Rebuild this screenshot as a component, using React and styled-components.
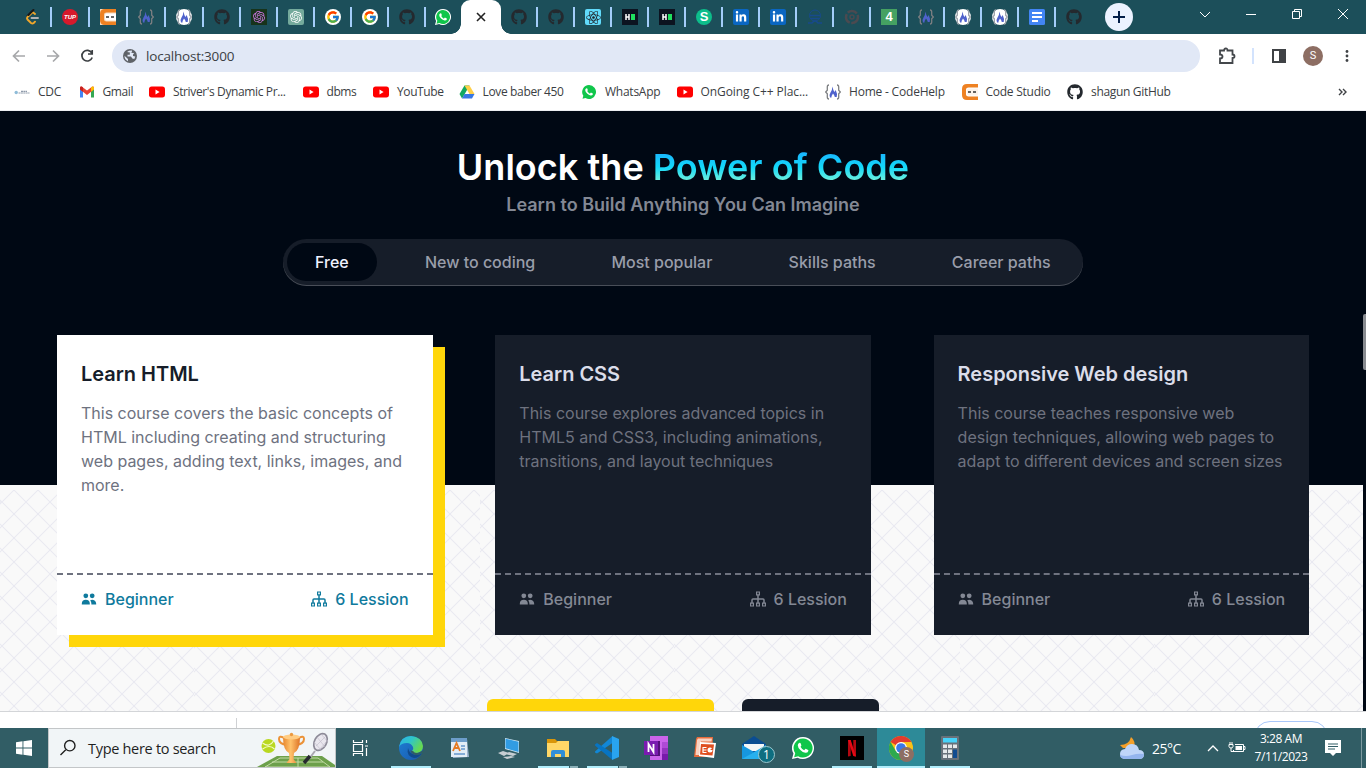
import React from "react";
import styled, { createGlobalStyle, css } from "styled-components";
import { FaGithub, FaReact, FaLinkedinIn } from "react-icons/fa";
import { SiOpenai } from "react-icons/si";
import { FcGoogle } from "react-icons/fc";
import { HiUsers } from "react-icons/hi";

const Global = createGlobalStyle`
  * { box-sizing: border-box; }
  body { margin: 0; overflow: hidden; background: #fff; }
  svg { display: block; flex: none; }
`;

const ui = `"Open Sans", "Noto Sans", sans-serif`;

const Screen = styled.div`
  width: 1366px;
  height: 768px;
  display: flex;
  flex-direction: column;
  overflow: hidden;
  font-family: ${ui};
`;

/* ---------- browser chrome ---------- */
const TabStrip = styled.div`
  height: 34px;
  flex: none;
  display: flex;
  background: #1c4f5a;
  padding-left: 14px;
`;
const Tab = styled.div`
  width: ${(p) => p.$w}px;
  height: 34px;
  display: flex;
  align-items: center;
  justify-content: flex-end;
  padding-right: ${(p) => (p.$w === 38 ? 10 : 9)}px;
  border-right: 2px solid transparent;
  &::after {
    content: "";
    width: 2px;
    height: 20px;
    margin-right: ${(p) => (p.$w === 38 ? -12 : -11)}px;
    margin-left: ${(p) => (p.$w === 38 ? 10 : 9)}px;
    background: ${(p) => (p.$last ? "transparent" : "#a3cdfa")};
  }
`;
const ActiveTab = styled.div`
  width: 40px;
  height: 34px;
  margin-left: -1px;
  background: #fff;
  border-radius: 9px 9px 0 0;
  display: flex;
  align-items: center;
  justify-content: center;
  position: relative;
  &::before,
  &::after {
    content: "";
    position: absolute;
    bottom: 0;
    width: 10px;
    height: 10px;
  }
  &::before {
    right: 100%;
    background: radial-gradient(circle at 0 0, transparent 9.5px, #fff 10px);
  }
  &::after {
    left: 100%;
    background: radial-gradient(circle at 100% 0, transparent 9.5px, #fff 10px);
  }
`;
const NewTab = styled.div`
  width: 28px;
  height: 28px;
  border-radius: 50%;
  background: #ecf2ff;
  margin: 3px 0 0 12px;
  display: flex;
  align-items: center;
  justify-content: center;
`;
const WindowControls = styled.div`
  margin-left: auto;
  width: 184px;
  height: 28px;
  display: flex;
  align-items: center;
  > * {
    width: 46px;
  }
`;
const Favicon = styled.div`
  width: 16px;
  height: 16px;
  flex: none;
  display: flex;
  align-items: center;
  justify-content: center;
  overflow: hidden;
  border-radius: ${(p) => p.$r || "0"};
  background: ${(p) => p.$bg || "none"};
  color: ${(p) => p.$c || "#fff"};
  font: 700 ${(p) => p.$fs || 13}px/16px "Liberation Sans", sans-serif;
`;
const Toolbar = styled.div`
  height: 44px;
  flex: none;
  display: flex;
  align-items: center;
  padding-left: 11px;
`;
const NavButtons = styled.div`
  width: 101px;
  display: flex;
  gap: 18px;
`;
const UrlBar = styled.div`
  width: 1088px;
  height: 32px;
  border-radius: 16px;
  background: #e1e8f6;
  display: flex;
  align-items: center;
  gap: 9px;
  padding-left: 11px;
  font-size: 13.5px;
  letter-spacing: -0.2px;
  color: #3c3f44;
`;
const Actions = styled.div`
  display: flex;
  align-items: center;
  margin-left: 18px;
`;
const Divider = styled.div`
  width: 2px;
  height: 16px;
  background: #d3e3fd;
  margin: 0 18px 0 16px;
`;
const Avatar = styled.div`
  width: 20px;
  height: 20px;
  border-radius: 50%;
  background: #8d6e63;
  color: #fff;
  font: 11px/20px Roboto, sans-serif;
  text-align: center;
  margin: 0 22px 0 17px;
`;
const Bookmarks = styled.div`
  height: 33px;
  flex: none;
  display: flex;
  align-items: center;
  padding: 0 0 4px 14px;
  border-bottom: 1px solid #eceef2;
`;
const Bookmark = styled.div`
  display: flex;
  align-items: center;
  gap: 8px;
  margin-right: 16.5px;
`;
const BookmarkLabel = styled.span`
  width: ${(p) => p.$w}px;
  white-space: nowrap;
  font-size: 12px;
  line-height: 16px;
  letter-spacing: ${(p) => p.$ls}px;
  color: #3b3e43;
`;
const More = styled.div`
  margin: 0 18px 0 auto;
`;

/* ---------- web page ---------- */
const Page = styled.main`
  height: 600px;
  flex: none;
  position: relative;
  overflow: hidden;
  background: #000814;
  font-family: Inter, sans-serif;
`;
const Backdrop = styled.svg`
  position: absolute;
  left: 0;
  top: 374px;
`;
const ScrollThumb = styled.div`
  position: absolute;
  right: 0;
  top: 203px;
  width: 3px;
  height: 56px;
  background: #888b90;
  border-radius: 2px 0 0 2px;
`;
const Content = styled.div`
  position: relative;
  display: flex;
  flex-direction: column;
  align-items: center;
  padding-top: 34px;
`;
const Heading = styled.h1`
  margin: 0;
  font-size: 36px;
  line-height: 44px;
  font-weight: 600;
  letter-spacing: 0.04px;
  color: #fff;
`;
const Highlight = styled.span`
  background: linear-gradient(180deg, #1fa2ff 0%, #12d8fa 50%, #a6ffcb 100%);
  background-clip: text;
  -webkit-background-clip: text;
  color: transparent;
`;
const Tagline = styled.p`
  margin: 3px 0 0;
  font-size: 18px;
  line-height: 26px;
  font-weight: 600;
  color: #838894;
`;
const PathTabs = styled.nav`
  height: 47px;
  width: 800px;
  margin-top: 21px;
  padding: 4px;
  display: flex;
  gap: 20.2px;
  border-radius: 24px;
  background: #161d29;
  box-shadow: inset 0 -1px 0 rgba(255, 255, 255, 0.22);
`;
const PathTab = styled.div`
  height: 38px;
  padding: 0 28px;
  border-radius: 19px;
  white-space: nowrap;
  font-size: 16px;
  line-height: 38px;
  font-weight: 500;
  color: ${(p) => (p.$active ? "#f1f2ff" : "#999daa")};
  background: ${(p) => (p.$active ? "#000814" : "transparent")};
`;
const Cards = styled.section`
  width: 1252.2px;
  margin: 49px 0 0 0.2px;
  display: flex;
  justify-content: space-between;
`;
const Card = styled.article`
  width: 375.6px;
  height: 300px;
  display: flex;
  flex-direction: column;
  ${(p) =>
    p.$active
      ? css`
          background: #fff;
          box-shadow: 12px 12px 0 #ffd60a;
          --title: #161d29;
          --meta: #0f7a9d;
        `
      : css`
          background: #161d29;
          --title: #dbddea;
          --meta: #838894;
        `}
`;
const CardBody = styled.div`
  flex: 1;
  padding: 24px 22px 0 24px;
`;
const CardTitle = styled.h2`
  margin: 0;
  font-size: 20px;
  line-height: 30px;
  font-weight: 600;
  letter-spacing: -0.02px;
  color: var(--title);
`;
const CardText = styled.p`
  margin: 12px 0 0;
  font-size: 16px;
  line-height: 24px;
  color: #6e727f;
`;
const CardFooter = styled.footer`
  height: 62px;
  border-top: 2px dashed #6e727f;
  padding: 12px 24px 0;
  display: flex;
  justify-content: space-between;
  font-size: 16px;
  line-height: 24px;
  font-weight: 500;
  color: var(--meta);
`;
const Meta = styled.div`
  display: flex;
  height: 24px;
  align-items: center;
  gap: 8px;
`;
const Buttons = styled.div`
  display: flex;
  gap: 28px;
  margin-top: 64px;
`;
const Cta = styled.div`
  width: ${(p) => p.$w}px;
  height: 48px;
  border-radius: 6px;
  background: ${(p) => p.$bg};
`;

const DownloadShelf = styled.div`
  height: 17px;
  flex: none;
  display: flex;
  justify-content: space-between;
  overflow: hidden;
  border-top: 1px solid #d3d5d8;
  background: #fff;
  padding: 6px 38px 0 236px;
`;
const ShelfDivider = styled.div`
  width: 1px;
  height: 12px;
  background: #cfd1d4;
`;
const ShowAll = styled.div`
  width: 74px;
  height: 32px;
  margin-top: 3px;
  border: 1px solid #a8c7fa;
  border-radius: 16px;
`;

/* ---------- taskbar ---------- */
const Taskbar = styled.div`
  height: 40px;
  flex: none;
  display: flex;
  background: #315d65;
`;
const Start = styled.div`
  width: 48px;
  display: flex;
  align-items: center;
  justify-content: center;
`;
const Search = styled.div`
  width: 288px;
  height: 40px;
  border: 1px solid #c3c6c8;
  background: #f1f5f7;
  display: flex;
  align-items: center;
  padding-left: 10px;
  overflow: hidden;
  color: #1f1f1f;
`;
const SearchLabel = styled.span`
  flex: none;
  margin-left: 11px;
  width: 169px;
  font-size: 14.5px;
  letter-spacing: -0.3px;
  white-space: nowrap;
`;
const TaskItem = styled.div`
  width: ${(p) => p.$w || 49}px;
  padding-right: ${(p) => (p.$w ? 3 : 1)}px;
  height: 40px;
  display: flex;
  align-items: center;
  justify-content: center;
  position: relative;
  background: ${(p) =>
    p.$active
      ? "linear-gradient(#2d8a98,#2d8a98) no-repeat 0 0 / 48px 40px"
      : "none"};
  &::after {
    content: "";
    position: absolute;
    bottom: 0;
    left: ${(p) => (p.$active ? 0 : 4)}px;
    width: ${(p) => (p.$active ? 48 : 40)}px;
    height: 2px;
    background: ${(p) =>
      p.$multi
        ? "linear-gradient(90deg,#b0edfb 31px,#315d65 31px,#315d65 32px,#8bb0b8 32px)"
        : p.$open
        ? "#b0edfb"
        : "none"};
  }
`;
const Tray = styled.div`
  margin-left: auto;
  display: flex;
  align-items: center;
  color: #fff;
  height: 40px;
`;
const Temp = styled.span`
  margin-left: 7px;
  width: 55px;
  font-size: 14px;
  letter-spacing: -0.5px;
`;
const TrayChevron = styled.div`
  margin-right: 9px;
`;
const Clock = styled.div`
  width: 62px;
  margin: 0 13px 0 4px;
  font-size: 12px;
  line-height: 18px;
  letter-spacing: -0.45px;
  text-align: center;
  white-space: nowrap;
`;
const ShowDesktop = styled.div`
  width: 5px;
  height: 40px;
  margin-left: 20px;
  border-left: 1px solid #7d9aa0;
`;

/* ---------- icons ---------- */
const LeetCode = () => (
  <svg width="16" height="16" viewBox="0 0 16 16" fill="none" strokeWidth="1.900" strokeLinecap="round">
    <path d="M9.500 1 3.500 7" stroke="#1a1a1a" />
    <path d="M11 5 9.500 3.700Q8.500 3.200 7.500 4.200L3.500 8q-1 1.300 0 2.500l3.500 3.500q1.500 1 2.700 0L11 12.700" stroke="#f0a62b" />
    <path d="M8.800 1.600 4.500 6" stroke="#1a1a1a" />
    <path d="M7.500 9H14" stroke="#b3b3b3" />
  </svg>
);
const CodeStudio = ({ tile }) => (
  <svg width="16" height="16" viewBox="0 0 16 16">
    {tile && <rect width="16" height="16" fill="#f4d9bd" />}
    <path d="M16 0H5Q0 0 0 5v6q0 5 5 5h11v-3.500H6.500Q4 12.500 4 10.500v-5Q4 3.500 6.500 3.500H16z" fill="#ee8122" />
    <path d="M6 4.500h10v7H6q-1-.500-1-2v-3q0-1.500 1-2z" fill={tile ? "#fff" : "#fdf3ea"} />
    <path d="M6 8h3M11 8h3" stroke="#333" strokeWidth="1.300" />
  </svg>
);
const Flame = ({ disc }) => (
  <svg width="16" height="16" viewBox="0 0 16 16">
    {disc && <circle cx="8" cy="8" r="8" fill="#fff" />}
    <path d="M4 1Q2.300 1 2.300 3v3.200L.7 8l1.600 1.800V13q0 2 1.700 2M12 1q1.700 0 1.700 2v3.200L15.300 8l-1.600 1.800V13q0 2-1.700 2" fill="none" stroke={disc ? "#9aa0a8" : "#7d7f82"} strokeWidth="1.300" />
    <path d="M7.500 2.500Q8 6 9.500 8l1.200-2q2 4 1 7H9.800Q9.500 11 8 9.500 6.500 11.500 6.500 13.500H5Q3.800 11 5.500 8.500 7.300 6 7.500 2.500z" fill="#4f62cc" />
  </svg>
);
const WhatsIcon = ({ s = 16 }) => (
  <svg width={s} height={s} viewBox="0 0 24 24">
    <path d="M12 0a12 12 0 1 1-5.800 22.500L0 24l1.600-6A12 12 0 0 1 12 0z" fill="#fff" />
    <path d="M12 1.600a10.400 10.400 0 1 1-5.300 19.300L2.300 22l1.200-4.300A10.400 10.400 0 0 1 12 1.600z" fill="#10c64b" />
    <path d="M8.300 6.300q.8-.2 1.100.6l.8 2q.2.700-.9 1.700 1.400 2.800 4 3.900l1.200-1.400q.4-.4 1-.1l2.100 1.100q.5.300.2 1.100-.6 2.100-3.300 2-2.800-.4-5.400-3-2.800-2.700-2.800-5.200 0-1.700 2-2.700z" fill="#fff" />
  </svg>
);
const YouTube = () => (
  <svg width="16" height="16" viewBox="0 0 16 16">
    <rect y="2.500" width="16" height="11" rx="2.700" fill="#f00" />
    <path d="M6.500 5.500v5L10.600 8z" fill="#fff" />
  </svg>
);
const Gmail = () => (
  <svg width="16" height="16" viewBox="0 0 16 16">
    <path d="M1 4v9.500h3V6z" fill="#4285f4" />
    <path d="M12 6v7.500h3V4z" fill="#34a853" />
    <path d="M1 4q0-2 2-1.200l5 3.800 5-3.800Q15 2 15 4v1.500L8 11 1 5.500z" fill="#ea4335" />
    <path d="M1 3.800q.2-1.500 1.800-1.200L4 3.500v4.300L1 5.500z" fill="#c5221f" />
    <path d="M15 3.800q-.2-1.500-1.800-1.200L12 3.500v4.300l3-2.300z" fill="#fbbc04" />
  </svg>
);
const Drive = () => (
  <svg width="16" height="16" viewBox="0 0 16 16">
    <path d="M5.500 1.500h5L6 9.500 3 14.500.5 10z" fill="#11a861" />
    <path d="M5.500 1.500h5l5 8.500h-5z" fill="#ffcf48" />
    <path d="M3 14.500 5.500 10h10L13 14.500z" fill="#3777e3" />
  </svg>
);
const CdcIcon = () => (
  <svg width="16" height="16" viewBox="0 0 16 16">
    <circle cx="2.200" cy="8.500" r="1.700" fill="#8fbcd8" />
    <path d="M4.500 9h11M7 7.300h6" stroke="#8f9bab" strokeWidth="1.200" strokeDasharray="2 .4" />
  </svg>
);
const Robot = () => (
  <svg width="16" height="16" viewBox="0 0 16 16" fill="none" stroke="#174a8c">
    <circle cx="8" cy="6.500" r="5.500" />
    <path d="M3 6.500h10M4 9.500h8M1 14h4l2-2h2l2 2h4" strokeWidth="1.500" />
  </svg>
);
const DarkChrome = () => (
  <svg width="16" height="16" viewBox="0 0 16 16" fill="none" stroke="#4b4a50">
    <circle cx="8" cy="8" r="6" strokeWidth="2.500" strokeDasharray="10 1.500" />
    <circle cx="8" cy="8" r="2" strokeWidth="1.500" />
  </svg>
);
const HackerRank = () => (
  <svg width="16" height="16" viewBox="0 0 16 16">
    <rect width="16" height="16" fill="#0c1320" />
    <path d="M4 5v6M7 5v6M4 8h3" stroke="#fff" strokeWidth="1.500" />
    <rect x="9" y="5" width="4" height="6" fill="#1fe05f" />
  </svg>
);
const Docs = () => (
  <svg width="16" height="16" viewBox="0 0 16 16">
    <rect width="16" height="16" rx="1.500" fill="#4285f4" />
    <path d="M3 4h10M3 8h10M3 12h6" stroke="#fff" strokeWidth="1.800" />
  </svg>
);
const Sitemap = () => (
  <svg width="16" height="16" viewBox="0 0 16 16" fill="none" stroke="currentColor">
    <path d="M6.600 1h2.800v2.800H6.600zM.6 12.200h2.800V15H.6zM6.600 12.200h2.800V15H6.600zM12.600 12.200h2.800V15h-2.800z" strokeWidth="1.200" />
    <path d="M8 4v8M2 12V9q0-1 1-1h10q1 0 1 1v3" strokeWidth="1.500" />
  </svg>
);
const Globe = () => (
  <svg width="14" height="14" viewBox="0 0 14 14">
    <circle cx="7" cy="7" r="7" fill="#5f6368" />
    <path d="M1.500 6.800 5 10v2.200Q1.500 11 1.500 6.800zM4 3l2-1.200 3-.2-.2 1.700-2 .8v1.700H4.500v1.800H8l1.300 2 2 .5 1-2.600-2.300-.5V5.500l1.300-1.200" fill="#e1e8f6" />
  </svg>
);
const Line = ({ d, w = 16, h = 16, c = "#fff", sw = 1 }) => (
  <svg width={w} height={h} viewBox={`0 0 ${w} ${h}`} fill="none" stroke={c} strokeWidth={sw}>
    <path d={d} />
  </svg>
);
const WindowsLogo = () => (
  <svg width="16" height="16" viewBox="0 0 16 16" fill="#fff">
    <path d="M0 2.300 6.500 1.300V7.600H0zM7.400 1.200 16 0v7.600H7.400zM0 8.400h6.500v6.300L0 13.700zM7.400 8.400H16V16l-8.600-1.200z" />
  </svg>
);
const SportsArt = () => (
  <svg width="78" height="38" viewBox="0 0 78 38">
    <defs>
      <linearGradient id="cup" x2="1">
        <stop stopColor="#e8872e" />
        <stop offset=".45" stopColor="#ffc26b" />
        <stop offset="1" stopColor="#de7426" />
      </linearGradient>
    </defs>
    <path d="M20 27h45l13 9v3H0v-1z" fill="#6da04b" />
    <path d="M23 29h38l12 9H8zM41 29v9M15 33h51" fill="none" stroke="#c3dba6" />
    <circle cx="11.500" cy="17" r="7" fill="#b9d820" />
    <path d="M5.500 14q7 5 11-2M5.500 20q7-5 12 0" fill="none" stroke="#f4fbc5" strokeWidth="1.200" />
    <path d="M27 9q-5-3-5 1 0 5 8 6M42 9q5-3 5 1 0 5-8 6" fill="none" stroke="#eb9136" strokeWidth="2" />
    <path d="M26 8h17q0 13-6 16l-.5 6 3 4h-10l3-4-.500-6Q26 21 26 8z" fill="url(#cup)" />
    <ellipse cx="34.500" cy="8" rx="8.500" ry="2.500" fill="#ffcc83" />
    <circle cx="34.500" cy="5.500" r="1.700" fill="#eb9940" />
    <ellipse cx="63.500" cy="13" rx="6" ry="9" transform="rotate(28 63.500 13)" fill="#e9e7ee" stroke="#8d8b98" strokeWidth="1.700" />
    <path d="m60 8 8 10M57 13l7 8M64 5l7 8M69 7l-10 10M71 11l-9 10" stroke="#bdbac8" strokeWidth=".6" />
    <path d="m58 22-6 8" stroke="#aaa8b0" strokeWidth="2" />
    <path d="m53 27-6 7" stroke="#272a2f" strokeWidth="3.500" />
  </svg>
);
const Edge = () => (
  <svg width="24" height="24" viewBox="0 0 24 24">
    <defs>
      <linearGradient id="eg" x2="1" y2=".5">
        <stop stopColor="#2cb2e8" />
        <stop offset=".5" stopColor="#2fc5c9" />
        <stop offset="1" stopColor="#67d94f" />
      </linearGradient>
      <linearGradient id="eb" x2="1" y2="1">
        <stop stopColor="#1d7fd5" />
        <stop offset="1" stopColor="#1a58ac" />
      </linearGradient>
    </defs>
    <circle cx="12" cy="12" r="12" fill="url(#eb)" />
    <path d="M0 11Q2 0 12 0q11 1 12 10 0 7-7 7-4 0-4-2 2-2 1-4Q12 7 8 7 2 7 0 11z" fill="url(#eg)" />
    <path d="M9 12q-2 8 6 10 5 0 8-5-4 3-8 1.500Q10 17 9 12z" fill="#114a8b" />
    <path d="M14 15q2 3 6 1.500l4-2v4L23 17q-4 3-8 1.500-3-.8-4-4z" fill="#315d65" />
  </svg>
);
const WordPad = () => (
  <svg width="20" height="22" viewBox="0 0 20 22">
    <path d="M2 2h15l2 18-16 1z" fill="#9db4cf" />
    <path d="M1 1h16v19H1z" fill="#e3edf6" />
    <path d="M1 1h16v4H1z" fill="#6c9dca" />
    <path d="m3 14 3.500-8L10 14M4.500 11h4" fill="none" stroke="#e47b24" strokeWidth="1.800" />
    <path d="M11 9h4M11 12h4M4 17h11" stroke="#6697cb" strokeWidth="1.300" />
  </svg>
);
const Computer = () => (
  <svg width="24" height="24" viewBox="0 0 24 24">
    <path d="m8 2 14 3v12L8 13z" fill="#d1e8f5" />
    <path d="m8.500 2.800 13 2.900v10.300L8.500 12.300z" fill="#319ce3" />
    <path d="m12 16 8 2-4 2-8-2zM1 17l5-2 6 2-5 3zM6 21l8-1 4 1-8 2z" fill="#c6ced3" />
  </svg>
);
const Folder = () => (
  <svg width="22" height="20" viewBox="0 0 22 20">
    <path d="M0 1h8l2 2h11v6H0z" fill="#d9960a" />
    <path d="M0 5h9l2-2h11v16H0z" fill="#ffd767" />
    <path d="M4 19v-5q0-2 2-2h10q2 0 2 2v5h-4v-3H8v3z" fill="#328fd8" />
  </svg>
);
const VSCode = () => (
  <svg width="24" height="24" viewBox="0 0 24 24">
    <path d="M0 15.500 17.500 0v7L2 17.500 0 16.500z" fill="#1287d6" />
    <path d="M0 8.500 2 7l15.500 10v7L0 9.500z" fill="#0774c2" />
    <path d="m17 0 7 3v18l-7 3z" fill="#29a4ef" />
  </svg>
);
const OneNote = () => (
  <svg width="24" height="24" viewBox="0 0 24 24">
    <path d="M6 0h18v24H6z" fill="#ca64ea" />
    <path d="M18 6h6v6h-6z" fill="#ae4bd5" />
    <path d="M18 12h6v6h-6z" fill="#9332bf" />
    <path d="M18 18h6v6h-6z" fill="#7719aa" />
    <path d="M6 5h10v15H6z" fill="#54107a" />
    <path d="M0 5h14v14H0z" fill="#7a1bb0" />
    <path d="M4.500 16V8l5 8V8" fill="none" stroke="#fff" strokeWidth="1.800" />
  </svg>
);
const PowerPoint = () => (
  <svg width="24" height="24" viewBox="0 0 24 24">
    <path d="M4 1h16l-1 20H1L3 3z" fill="#e66c3b" />
    <path d="M5 2.500h14l-.5 3H8L6 19H2.500L4 4z" fill="#f9d2c1" />
    <path d="m7 6 16 1-2 15-15-2z" fill="#fff" />
    <path d="m8 8 13 .5-1.500 11-12.500-1z" fill="#df4f20" />
    <path d="M9.500 11.500h4M9.500 14h4M9.500 16.500h4M10 11.500v5" stroke="#fff" strokeWidth="1.200" />
    <circle cx="17" cy="14" r="2.500" fill="#fff" />
    <path d="M17 14h3v-2.500z" fill="#df4f20" />
  </svg>
);
const MailWrap = styled.div`
  position: relative;
  width: 24px;
  height: 24px;
`;
const MailBadge = styled.span`
  position: absolute;
  left: 16px;
  top: 10px;
  width: 17px;
  height: 17px;
  border: 1px solid #9bc7ce;
  border-radius: 50%;
  background: #0e6e80;
  color: #fff;
  font-size: 12px;
  line-height: 15px;
  text-align: center;
`;
const Mail = () => (
  <MailWrap>
    <svg width="24" height="24" viewBox="0 0 24 24">
      <path d="M0 8 12 0l12 8v14H0z" fill="#0b4d92" />
      <path d="M2 8h20v7H2z" fill="#f4f5f6" />
      <path d="m0 9 12 7-10 7H0z" fill="#1697df" />
      <path d="m24 9-24 14h24z" fill="#27b0ee" />
    </svg>
    <MailBadge>1</MailBadge>
  </MailWrap>
);
const Netflix = () => (
  <svg width="24" height="24" viewBox="0 0 24 24">
    <rect width="24" height="24" fill="#000" />
    <path d="M8 4h2.700v16L8 20.500zM13.300 4H16v16.500l-2.700-.5z" fill="#b20710" />
    <path d="M8 4h2.700L16 20.500l-2.700-.4z" fill="#e50914" />
  </svg>
);
const ChromeWrap = styled.div`
  position: relative;
  width: 24px;
  height: 24px;
`;
const ChromeBadge = styled.span`
  position: absolute;
  left: 10px;
  top: 11px;
  width: 15px;
  height: 15px;
  border-radius: 50%;
  background: #8d6e63;
  color: #fff;
  font: 9px/15px Roboto, sans-serif;
  text-align: center;
`;
const Chrome = () => (
  <ChromeWrap>
    <svg width="24" height="24" viewBox="0 0 24 24">
      <circle cx="12" cy="12" r="12" fill="#fbc116" />
      <path d="M12 12 1.600 6A12 12 0 0 1 22.400 6H12z" fill="#e33b2e" />
      <path d="M1.600 6A12 12 0 0 0 12 24l5.200-9L12 12 6.800 15z" fill="#2da94f" />
      <circle cx="12" cy="12" r="6" fill="#fff" />
      <circle cx="12" cy="12" r="4.800" fill="#3b78e7" />
    </svg>
    <ChromeBadge>S</ChromeBadge>
  </ChromeWrap>
);
const Calculator = () => (
  <svg width="18" height="24" viewBox="0 0 18 24">
    <rect width="18" height="24" rx="1" fill="#68717a" />
    <rect x="2" y="2" width="14" height="4.500" fill="#47d2f8" />
    <path d="M2 8.500h4v3.500H2zm5 0h4v3.500H7zm5 0h4v3.500h-4zM2 13.500h4V17H2zm5 0h4V17H7zM2 18.500h4V22H2zm5 0h4V22H7z" fill="#e5e8ea" />
    <path d="M12 13.500h4V22h-4z" fill="#104b91" />
  </svg>
);
const Weather = () => (
  <svg width="26" height="24" viewBox="0 0 26 24">
    <path d="M12 1q5 4 3 11H4L1 9q9 0 11-8z" fill="#f4a029" />
    <path d="M7 23q-6 0-6-5 0-4.500 5-5 2-5 7-5 6 0 7 6 5 0 5 4.500T20 23z" fill="#bfd5f8" />
    <path d="M7 23q-6 0-6-4 6 2 12 0 6-2 12-1 0 5-5 5z" fill="#94b5ee" />
  </svg>
);

const gh = <FaGithub size={16} color="#24292e" />;
const li = (
  <Favicon $bg="#0a66c2" $r="2px">
    <FaLinkedinIn size={12} />
  </Favicon>
);
const google = (
  <Favicon $bg="#fff" $r="50%">
    <FcGoogle size={14} />
  </Favicon>
);
const leftTabs = [
  <LeetCode />,
  <Favicon $bg="#d6192c" $r="50%" $fs={6}><i>TUP</i></Favicon>,
  <CodeStudio tile />,
  <Flame />,
  <Flame disc />,
  gh,
  <Favicon $bg="#17331b"><SiOpenai size={12} color="#cb76df" /></Favicon>,
  <Favicon $bg="#74aa9c" $r="2px"><SiOpenai size={12} /></Favicon>,
  google,
  google,
  gh,
  <WhatsIcon />,
];
const rightTabs = [
  gh,
  gh,
  <Favicon $bg="#61dafb" $r="2px"><FaReact size={15} color="#20232a" /></Favicon>,
  <HackerRank />,
  <HackerRank />,
  <Favicon $bg="#0dbd8b" $r="50%">S</Favicon>,
  li,
  li,
  <Robot />,
  <DarkChrome />,
  <Favicon $bg="#45a162">4</Favicon>,
  <Flame />,
  <Flame disc />,
  <Flame disc />,
  <Docs />,
  gh,
];
/* icon, label, label width, letter spacing */
const bookmarks = [
  [<CdcIcon />, "CDC", 24, -0.25],
  [<Gmail />, "Gmail", 30, -0.4],
  [<YouTube />, "Striver's Dynamic Pr...", 113, -0.38],
  [<YouTube />, "dbms", 30, -0.45],
  [<YouTube />, "YouTube", 45, -0.4],
  [<Drive />, "Love baber 450", 82, -0.35],
  [<WhatsIcon />, "WhatsApp", 55, -0.25],
  [<YouTube />, "OnGoing C++ Plac...", 108, -0.08],
  [<Flame />, "Home - CodeHelp", 96, -0.2],
  [<CodeStudio />, "Code Studio", 65, -0.25],
  [<FaGithub size={16} color="#24292e" />, "shagun GitHub", 80, -0.32],
];
const paths = ["Free", "New to coding", "Most popular", "Skills paths", "Career paths"];
const courses = [
  ["Learn HTML", "This course covers the basic concepts of HTML including creating and structuring web pages, adding text, links, images, and more."],
  ["Learn CSS", "This course explores advanced topics in HTML5 and CSS3, including animations, transitions, and layout techniques"],
  ["Responsive Web design", "This course teaches responsive web design techniques, allowing web pages to adapt to different devices and screen sizes"],
];
const tiles = [0, 480, 960].flatMap((x) => [
  [x, 194],
  [x + 194, 194],
  [x + 388, 92],
]);

function Lattice() {
  return (
    <Backdrop width="1363" height="226" viewBox="0 0 1363 226">
      <defs>
        <pattern id="lattice" x="2" y="5" width="24" height="24" patternUnits="userSpaceOnUse">
          <path d="M-1 11 13 25M11-1 25 13M-1 13 13-1M11 25 25 11" stroke="#e9e9f1" strokeWidth="1.100" />
        </pattern>
      </defs>
      <rect width="1363" height="226" fill="#f9f9f9" />
      {tiles.map(([x, w]) => (
        <svg key={x} x={x} y="5" width={w} height="221" overflow="hidden">
          <g transform="translate(0 -5)">
            <rect y="5" width={w} height="221" fill="url(#lattice)" />
            <path d="M-2 15 2 17-2 19z" fill="#e9e9f1" />
          </g>
        </svg>
      ))}
    </Backdrop>
  );
}

export default function App() {
  return (
    <Screen>
      <Global />
      <TabStrip>
        {leftTabs.map((icon, i) => (
          <Tab key={i} $w={i < 5 ? 38 : i === 11 ? 36 : 37} $last={i === 11}>
            {icon}
          </Tab>
        ))}
        <ActiveTab>
          <Line w={10} h={10} d="M1 1 9 9M9 1 1 9" c="#222" sw={1.6} />
        </ActiveTab>
        {rightTabs.map((icon, i) => (
          <Tab key={i} $w={37} $last={i === 15}>
            {icon}
          </Tab>
        ))}
        <NewTab>
          <Line w={14} h={14} d="M7 1v12M1 7h12" c="#041e49" sw={2} />
        </NewTab>
        <WindowControls>
          <Line w={46} h={16} d="m18 6 5 5 5-5" />
          <Line w={46} h={16} d="M18 8.500h10" />
          <Line w={46} h={16} d="M18.500 5.500h7v7h-7zM20.500 5.500v-2h7v7h-2" />
          <Line w={46} h={16} d="m18 3 10 10M28 3 18 13" />
        </WindowControls>
      </TabStrip>

      <Toolbar>
        <NavButtons>
          <Line d="M14 8H2.500M8 2.500 2.500 8 8 13.500" c="#a7a8aa" sw={1.7} />
          <Line d="M2 8h11.500M8 2.500 13.500 8 8 13.500" c="#a7a8aa" sw={1.7} />
          <Line d="M12.800 5A5.300 5.300 0 1 0 13.200 9.500M13.200 2v4H9" c="#3c4043" sw={1.7} />
        </NavButtons>
        <UrlBar>
          <Globe />
          localhost:3000
        </UrlBar>
        <Actions>
          <Line w={18} h={18} d="M2 3.500h4Q6 1.500 7.800 1.500T9.500 3.500h5v4q2 0 2 1.700T14.500 11v5H2v-4.500q2.500 0 2.500-2T2 7.500z" c="#43474b" sw={1.8} />
          <Divider />
          <svg width="14" height="14" viewBox="0 0 14 14">
            <path d="M0 0h14v14H0zM2 2v10h5V2z" fill="#3f4245" fillRule="evenodd" />
          </svg>
          <Avatar>S</Avatar>
          <svg width="4" height="14" viewBox="0 0 4 14" fill="#3f4245">
            <circle cx="2" cy="2.500" r="1.400" />
            <circle cx="2" cy="7" r="1.400" />
            <circle cx="2" cy="11.500" r="1.400" />
          </svg>
        </Actions>
      </Toolbar>

      <Bookmarks>
        {bookmarks.map(([icon, label, w, ls]) => (
          <Bookmark key={label}>
            {icon}
            <BookmarkLabel $w={w} $ls={ls}>{label}</BookmarkLabel>
          </Bookmark>
        ))}
        <More>
          <Line w={10} h={8} d="m1 1 3 3-3 3M5 1l3 3-3 3" c="#3f4245" sw={1.4} />
        </More>
      </Bookmarks>

      <Page>
        <Lattice />
        <Content>
          <Heading>
            Unlock the <Highlight>Power of Code</Highlight>
          </Heading>
          <Tagline>Learn to Build Anything You Can Imagine</Tagline>
          <PathTabs>
            {paths.map((p, i) => (
              <PathTab key={p} $active={i === 0}>
                {p}
              </PathTab>
            ))}
          </PathTabs>
          <Cards>
            {courses.map(([title, text], i) => (
              <Card key={title} $active={i === 0}>
                <CardBody>
                  <CardTitle>{title}</CardTitle>
                  <CardText>{text}</CardText>
                </CardBody>
                <CardFooter>
                  <Meta>
                    <HiUsers size={16} />
                    Beginner
                  </Meta>
                  <Meta>
                    <Sitemap />6 Lession
                  </Meta>
                </CardFooter>
              </Card>
            ))}
          </Cards>
          <Buttons>
            <Cta $w={227} $bg="#ffd60a" />
            <Cta $w={137} $bg="#161d29" />
          </Buttons>
        </Content>
        <ScrollThumb />
      </Page>

      <DownloadShelf>
        <ShelfDivider />
        <ShowAll />
      </DownloadShelf>

      <Taskbar>
        <Start>
          <WindowsLogo />
        </Start>
        <Search>
          <Line w={18} h={18} d="M16 6.700a5.200 5.200 0 1 1-10.400 0 5.200 5.200 0 0 1 10.400 0zM7 10.500 1.500 16" c="#1f1f1f" sw={1.4} />
          <SearchLabel>Type here to search</SearchLabel>
          <SportsArt />
        </Search>
        <TaskItem $w={51}>
          <Line w={18} h={16} d="M2.500 4.500h9v7h-9zM2.500 0v2.500h9V0M2.500 16v-2.500h9V16M15.500 0v3M15.500 8v8M14 6h3" sw={1.2} />
        </TaskItem>
        <TaskItem $open><Edge /></TaskItem>
        <TaskItem><WordPad /></TaskItem>
        <TaskItem><Computer /></TaskItem>
        <TaskItem $multi><Folder /></TaskItem>
        <TaskItem $multi><VSCode /></TaskItem>
        <TaskItem><OneNote /></TaskItem>
        <TaskItem><PowerPoint /></TaskItem>
        <TaskItem><Mail /></TaskItem>
        <TaskItem><WhatsIcon s={22} /></TaskItem>
        <TaskItem $open><Netflix /></TaskItem>
        <TaskItem $open $active><Chrome /></TaskItem>
        <TaskItem $open><Calculator /></TaskItem>
        <Tray>
          <Weather />
          <Temp>25°C</Temp>
          <TrayChevron>
            <Line w={12} h={8} d="m1 7 5-5 5 5" sw={1.3} />
          </TrayChevron>
          <svg width="18" height="14" viewBox="0 0 18 14" fill="none" stroke="#fff">
            <path d="M7 3.500h8.500v7h-10V9M15.500 5.500h1.500v3h-1.500M1 3.500h4v2Q5 7 3 7T1 5.500zM2 1v2M4 1v2M3 7v3.500h3" />
            <path d="M7.500 5h6.500v4H7.500z" fill="#fff" stroke="none" />
          </svg>
          <Clock>
            3:28 AM
            <br />
            7/11/2023
          </Clock>
          <svg width="16" height="16" viewBox="0 0 16 16">
            <path d="M0 0h16v13h-5l-3 3-3-3H0z" fill="#fff" />
            <path d="M3 4h10M3 6.500h10M3 9h7" stroke="#315d65" />
          </svg>
          <ShowDesktop />
        </Tray>
      </Taskbar>
    </Screen>
  );
}
